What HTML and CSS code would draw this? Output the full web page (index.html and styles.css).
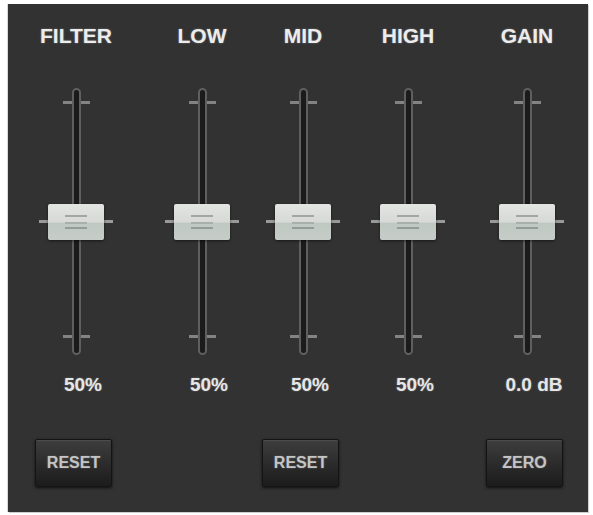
FILE: index.html
```html
<!DOCTYPE html>
<html>
<head>
<meta charset="utf-8">
<link rel="stylesheet" href="styles.css">
</head>
<body>
<div class="panel">
  <div class="label">FILTER</div>
  <div class="label">LOW</div>
  <div class="label">MID</div>
  <div class="label">HIGH</div>
  <div class="label">GAIN</div>

  <div class="slider"><div class="tick tick-top"></div><div class="tick tick-bottom"></div><div class="track"></div><div class="stub"></div><div class="knob"><span class="grip g1"></span><span class="grip g2"></span><span class="grip g3"></span></div></div>
  <div class="slider"><div class="tick tick-top"></div><div class="tick tick-bottom"></div><div class="track"></div><div class="stub"></div><div class="knob"><span class="grip g1"></span><span class="grip g2"></span><span class="grip g3"></span></div></div>
  <div class="slider"><div class="tick tick-top"></div><div class="tick tick-bottom"></div><div class="track"></div><div class="stub"></div><div class="knob"><span class="grip g1"></span><span class="grip g2"></span><span class="grip g3"></span></div></div>
  <div class="slider"><div class="tick tick-top"></div><div class="tick tick-bottom"></div><div class="track"></div><div class="stub"></div><div class="knob"><span class="grip g1"></span><span class="grip g2"></span><span class="grip g3"></span></div></div>
  <div class="slider"><div class="tick tick-top"></div><div class="tick tick-bottom"></div><div class="track"></div><div class="stub"></div><div class="knob"><span class="grip g1"></span><span class="grip g2"></span><span class="grip g3"></span></div></div>

  <div class="value">50%</div>
  <div class="value">50%</div>
  <div class="value">50%</div>
  <div class="value">50%</div>
  <div class="value">0.0 dB</div>

  <div class="btn-cell"><button class="btn">RESET</button></div>
  <div class="btn-cell"></div>
  <div class="btn-cell"><button class="btn">RESET</button></div>
  <div class="btn-cell"></div>
  <div class="btn-cell"><button class="btn">ZERO</button></div>
</div>
</body>
</html>
```

FILE: styles.css
```css
html, body {
  margin: 0;
  padding: 0;
  background: #ffffff;
}

body {
  padding: 4px 5px 3px 8px;
  font-family: "Liberation Sans", Arial, sans-serif;
}

.panel {
  width: 580px;
  height: 508px;
  box-sizing: border-box;
  background: #323232;
  padding-top: 20px;
  display: grid;
  grid-template-columns: 136px 116px 86px 124px 114px;
  grid-template-rows: auto auto auto auto;
  align-content: start;
  align-items: start;
  justify-items: center;
  box-shadow: 1px 1px 0 #cfcfcf, -1px 0 0 #d8d8d8;
}

.label {
  font-size: 21px;
  line-height: 24px;
  font-weight: bold;
  color: #ececec;
  text-shadow: 0 0 2px rgba(255, 255, 255, 0.35);
}

.slider {
  margin-top: 40px;
  width: 74px;
  height: 267px;
  display: grid;
  justify-items: center;
}

.slider > * {
  grid-area: 1 / 1;
}

.track {
  width: 9px;
  height: 267px;
  box-sizing: border-box;
  border: 2px solid #5f5f5f;
  border-radius: 5px;
  background: #1b1b1b;
}

.tick {
  width: 27px;
  height: 3px;
  background: #838383;
}

.tick-top {
  align-self: start;
  margin-top: 13px;
}

.tick-bottom {
  align-self: end;
  margin-bottom: 17px;
}

.stub {
  align-self: center;
  width: 74px;
  height: 3px;
  background: #9a9a9a;
}

.knob {
  align-self: center;
  width: 56px;
  height: 36px;
  box-sizing: border-box;
  border-radius: 2px;
  background: linear-gradient(to bottom, #e2e5e2 0%, #d6d9d6 50%, #c0c8c2 54%, #c6cdc8 100%);
  box-shadow: 0 1px 3px rgba(0, 0, 0, 0.55);
  display: flex;
  flex-direction: column;
  align-items: center;
  padding-top: 11px;
}

.grip {
  display: block;
  width: 22px;
  height: 2px;
}

.g1 {
  background: #a3a6a3;
}

.g2 {
  margin-top: 5px;
  background: #a9b1ab;
}

.g3 {
  margin-top: 3px;
  background: #939c96;
}

.value {
  margin-top: 19px;
  padding-left: 14px;
  font-size: 19px;
  line-height: 22px;
  font-weight: bold;
  color: #e6e6e6;
  text-shadow: 0 0 2px rgba(255, 255, 255, 0.3);
}

.btn-cell {
  margin-top: 43px;
  width: 100%;
  display: flex;
  justify-content: center;
}

.btn {
  margin-right: 5px;
  width: 77px;
  height: 48px;
  box-sizing: border-box;
  border: 1px solid #141414;
  border-radius: 2px;
  background: linear-gradient(to bottom, #3e3e3e 0%, #2c2c2c 50%, #1c1c1c 100%);
  box-shadow: 0 1px 3px rgba(0, 0, 0, 0.7), inset 0 1px 0 rgba(255, 255, 255, 0.08);
  font-family: "Liberation Sans", Arial, sans-serif;
  font-size: 16px;
  font-weight: bold;
  color: #c4c4c4;
  padding: 0;
  text-shadow: 0 0 2px rgba(255, 255, 255, 0.25);
}
```
